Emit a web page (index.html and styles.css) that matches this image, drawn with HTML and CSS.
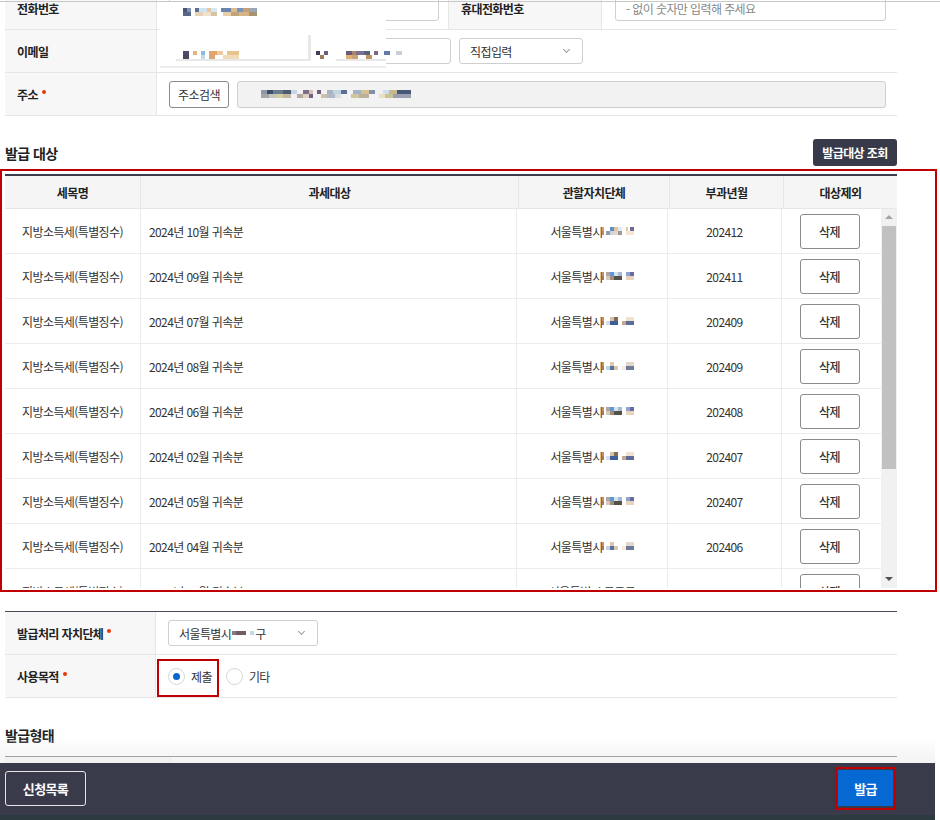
FILE: index.html
```html
<!DOCTYPE html>
<html lang="ko">
<head>
<meta charset="utf-8">
<title>발급</title>
<link rel="stylesheet" href="styles.css">
</head>
<body>
<div class="page">
  <div class="topline"></div>

  <div class="form top-form">
    <div class="row">
      <div class="th">전화번호</div>
      <div class="td td-phone"><div class="input w-phone"></div></div>
      <div class="th th-mid">휴대전화번호</div>
      <div class="td td-mobile"><div class="input w-mobile ph">- 없이 숫자만 입력해 주세요</div></div>
    </div>
    <div class="row">
      <div class="th">이메일</div>
      <div class="td email">
        <div class="input w-mail1"></div>
        <span class="at-slot"></span>
        <div class="input w-mail2"></div>
        <div class="select w-domain">직접입력<span class="chev"></span></div>
      </div>
    </div>
    <div class="row">
      <div class="th">주소<span class="req"></span></div>
      <div class="td addr">
        <button class="btn-line">주소검색</button>
        <div class="input input-gray w-addr"><span class="pix pix-addr"></span></div>
      </div>
    </div>
  </div>

  <div class="redact-top">
    <span class="pix pix-phone"></span>
    <div class="redact-mail">
      <div class="rbox rbox1"><span class="pix pix-mail1"></span></div>
      <div class="rbox rbox-at"><span class="pix pix-at"></span></div>
      <div class="rbox rbox2"><span class="pix pix-mail2"></span></div>
    </div>
  </div>

  <div class="sec-head">
    <h2>발급 대상</h2>
    <button class="btn-dark">발급대상 조회</button>
  </div>

  <div class="grid">
    <div class="ghead">
      <div>세목명</div>
      <div>과세대상</div>
      <div>관할자치단체</div>
      <div>부과년월</div>
      <div>대상제외</div>
    </div>
    <div class="gbody-wrap">
      <div class="gbody">
        <div class="grow"><div>지방소득세(특별징수)</div><div class="left">2024년 10월 귀속분</div><div>서울특별시 <span class="pix pix-gu"></span></div><div>202412</div><div class="act"><button class="btn-del">삭제</button></div></div>
        <div class="grow"><div>지방소득세(특별징수)</div><div class="left">2024년 09월 귀속분</div><div>서울특별시 <span class="pix pix-gu2"></span></div><div>202411</div><div class="act"><button class="btn-del">삭제</button></div></div>
        <div class="grow"><div>지방소득세(특별징수)</div><div class="left">2024년 07월 귀속분</div><div>서울특별시 <span class="pix pix-gu3"></span></div><div>202409</div><div class="act"><button class="btn-del">삭제</button></div></div>
        <div class="grow"><div>지방소득세(특별징수)</div><div class="left">2024년 08월 귀속분</div><div>서울특별시 <span class="pix pix-gu4"></span></div><div>202409</div><div class="act"><button class="btn-del">삭제</button></div></div>
        <div class="grow"><div>지방소득세(특별징수)</div><div class="left">2024년 06월 귀속분</div><div>서울특별시 <span class="pix pix-gu2"></span></div><div>202408</div><div class="act"><button class="btn-del">삭제</button></div></div>
        <div class="grow"><div>지방소득세(특별징수)</div><div class="left">2024년 02월 귀속분</div><div>서울특별시 <span class="pix pix-gu3"></span></div><div>202407</div><div class="act"><button class="btn-del">삭제</button></div></div>
        <div class="grow"><div>지방소득세(특별징수)</div><div class="left">2024년 05월 귀속분</div><div>서울특별시 <span class="pix pix-gu2"></span></div><div>202407</div><div class="act"><button class="btn-del">삭제</button></div></div>
        <div class="grow"><div>지방소득세(특별징수)</div><div class="left">2024년 04월 귀속분</div><div>서울특별시 <span class="pix pix-gu4"></span></div><div>202406</div><div class="act"><button class="btn-del">삭제</button></div></div>
        <div class="grow"><div>지방소득세(특별징수)</div><div class="left">2024년 03월 귀속분</div><div>서울특별시 구로구</div><div>202405</div><div class="act"><button class="btn-del">삭제</button></div></div>
      </div>
      <div class="scrollbar">
        <span class="sb-arrow sb-up"></span>
        <span class="sb-track"><span class="sb-thumb"></span></span>
        <span class="sb-arrow sb-down"></span>
      </div>
    </div>
  </div>

  <div class="form form2">
    <div class="row">
      <div class="th">발급처리 자치단체<span class="req"></span></div>
      <div class="td"><div class="select w-org">서울특별시<span class="pix pix-org"></span>구<span class="chev"></span></div></div>
    </div>
    <div class="row">
      <div class="th">사용목적<span class="req"></span></div>
      <div class="td radios">
        <label class="radio on"><span class="dot"></span>제출</label>
        <label class="radio"><span class="dot"></span>기타</label>
      </div>
    </div>
  </div>

  <h2 class="sec-title">발급형태</h2>
  <div class="form form3">
    <div class="row">
      <div class="th"></div>
      <div class="td"></div>
    </div>
  </div>

  <div class="footer">
    <button class="btn-outline">신청목록</button>
    <button class="btn-blue">발급</button>
  </div>

  <div class="mark mark-grid"></div>
  <div class="mark mark-radio"></div>
  <div class="mark mark-issue"></div>
</div>
</body>
</html>
```

FILE: styles.css
```css
html, body {
  margin: 0;
  padding: 0;
  overflow: hidden;
  background: #fff;
}
body {
  font-family: "Noto Sans CJK KR", "Noto Sans", sans-serif;
  font-size: 12px;
  color: #333;
  letter-spacing: -0.6px;
}
button {
  font-family: inherit;
  letter-spacing: inherit;
  cursor: pointer;
}
.page {
  position: relative;
  width: 940px;
  height: 820px;
  overflow: hidden;
}
.topline {
  position: absolute;
  left: 0;
  top: 1px;
  width: 940px;
  height: 1px;
  background: #c8c8c8;
  z-index: 2;
}

/* form tables */
.form {
  width: 892px;
  margin-left: 5px;
}
.top-form {
  margin-top: -13px;
}
.row {
  display: flex;
  height: 42px;
  border-bottom: 1px solid #e6e6e6;
}
.th {
  width: 139px;
  flex: none;
  display: flex;
  align-items: center;
  padding-left: 12px;
  background: #f7f7f7;
  border-right: 1px solid #e6e6e6;
  font-weight: 700;
  color: #222;
}
.td {
  flex: 1;
  display: flex;
  align-items: center;
  padding-left: 12px;
  gap: 8px;
}
.td-phone {
  flex: none;
  width: 279px;
}
.th-mid {
  width: 140px;
  border-left: 1px solid #e6e6e6;
}
.td-mobile { padding-left: 13px; }

.input, .select {
  box-sizing: border-box;
  height: 26px;
  border: 1px solid #cfcfcf;
  border-radius: 3px;
  background: #fff;
  display: flex;
  align-items: center;
  padding-left: 10px;
  color: #333;
}
.w-phone { width: 270px; }
.w-mobile { width: 271px; }
.ph { color: #888; }
.w-mail1 { width: 122px; }
.at-slot { width: 12px; margin-left: 2px; flex: none; }
.w-mail2 { width: 130px; }
.w-domain { width: 124px; position: relative; }
.addr { gap: 8px; }
.btn-line {
  box-sizing: border-box;
  width: 60px;
  height: 27px;
  border: 1px solid #8a8a8a;
  border-radius: 3px;
  background: #fff;
  font-size: 12px;
  color: #333;
  padding: 0;
}
.input-gray {
  background: #f2f2f2;
  height: 27px;
}
.w-addr { width: 649px; }

.chev {
  position: absolute;
  right: 13px;
  top: 8px;
  width: 4px;
  height: 4px;
  border-right: 1px solid #999;
  border-bottom: 1px solid #999;
  transform: rotate(45deg);
}
.req {
  display: inline-block;
  width: 4px;
  height: 4px;
  border-radius: 50%;
  background: #e8380d;
  margin-left: 4px;
  margin-top: -4px;
}

/* redaction patch over phone / email */
.redact-top {
  position: absolute;
  left: 160px;
  top: 2px;
  width: 226px;
  height: 64px;
  background: #fff;
  border-bottom: 2px solid #ececec;
  z-index: 1;
}
.pix-phone { display: block; margin: 4px 0 0 23px; }
.redact-mail {
  display: flex;
  margin-top: 16px;
  height: 26px;
}
.rbox {
  box-sizing: border-box;
  height: 26px;
  padding-top: 10px;
}
.rbox1 {
  width: 135px;
  margin-left: 16px;
  padding-left: 7px;
  border-bottom: 2px solid #e8e8e8;
  border-right: 3px solid #e8e8e8;
}
.rbox-at {
  width: 25px;
  padding-left: 5px;
}
.rbox2 {
  width: 50px;
  padding-left: 10px;
  border-bottom: 2px solid #e8e8e8;
}

/* pixelated redactions */
.pix {
  display: inline-block;
  height: 8px;
  flex: none;
}
.pix-phone {
  width: 74px;
  height: 8px;
  background:
    linear-gradient(90deg, #4a5675 0 4px, #8294b4 4px 8px, transparent 8px 12px, #5d6f92 12px 16px, #cfe3f1 16px 24px, #e7c79e 24px 28px, #d3e9f4 28px 34px, transparent 34px 38px, #6c84ad 38px 48px, #dcbc8f 48px 54px, #7a93bb 54px 60px, #c5a071 60px 66px, #9aa7b8 66px 74px) top/100% 4px no-repeat,
    linear-gradient(90deg, #5a6786 0 8px, transparent 8px 12px, #e6d3b8 12px 20px, #f0e2cd 20px 28px, #d9c2a0 28px 34px, transparent 34px 40px, #e9cfa7 40px 48px, #bfa47c 48px 56px, #d7b38a 56px 66px, #a7946f 66px 74px) bottom/100% 4px no-repeat;
}
.pix-mail1 {
  width: 56px;
  background:
    linear-gradient(90deg, #4f4a6b 0 6px, transparent 6px 10px, #e6b17d 10px 14px, transparent 14px 18px, #8fb8dd 18px 22px, transparent 22px 26px, #e3a56a 26px 34px, #efc9a0 34px 40px, transparent 40px 44px, #e7c48f 44px 50px) top/100% 4px no-repeat,
    linear-gradient(90deg, #4a4560 0 6px, transparent 6px 18px, #c7d8e6 18px 22px, transparent 22px 26px, #d8a677 26px 32px, transparent 32px 40px, #f0dbb8 40px 46px) bottom/100% 4px no-repeat;
}
.pix-at {
  width: 12px;
  background:
    linear-gradient(90deg, #443c55 0 4px, transparent 4px 8px, #6d5f7a 8px 12px) top/100% 4px no-repeat,
    linear-gradient(90deg, transparent 0 4px, #9b7a5e 4px 8px, transparent 8px 12px) bottom/100% 4px no-repeat;
}
.pix-mail2 {
  width: 56px;
  margin-top: -2px;
  background:
    linear-gradient(90deg, #6a5a7a 0 6px, #a8866a 6px 10px, #7d6f90 10px 18px, #54607e 18px 24px, transparent 24px 28px, #7a6a86 28px 32px, transparent 32px 38px, #5f7aa5 38px 44px, transparent 44px 50px, #c9ced8 50px 56px) top/100% 4px no-repeat,
    linear-gradient(90deg, #e0b071 0 6px, #c9a27a 6px 12px, transparent 12px 20px, #c09366 20px 26px, transparent 26px 56px) bottom/100% 4px no-repeat;
}
.pix-addr {
  width: 180px;
  margin-left: 13px;
  background:
    linear-gradient(90deg, #8e98a8 0 6px, #3c4d66 6px 12px, #6a7a8e 12px 22px, #4a5a70 22px 30px, #c6d6e0 30px 36px, transparent 36px 42px, #7c6e8a 42px 48px, #d2c4b2 48px 52px, transparent 52px 56px, #6e5d7a 56px 60px, transparent 60px 66px, #a9b3c0 66px 72px, #c2d4e2 72px 80px, #5c6e8e 80px 86px, transparent 86px 92px, #a2b2c4 92px 100px, #d6c094 100px 108px, #8090a6 108px 114px, transparent 114px 122px, #d2dcea 122px 128px, #c8b88e 128px 136px, #4a5878 136px 150px, transparent 150px 180px) top/100% 4px no-repeat,
    linear-gradient(90deg, #a6a6a6 0 8px, #c5c5b9 8px 16px, #d3cf9c 16px 22px, #c1b7a4 22px 30px, transparent 30px 36px, #b5a8a0 36px 42px, #e2d5c0 42px 48px, #7a5f8a 48px 52px, transparent 52px 60px, #c9c0a8 60px 66px, #b0b9c6 66px 74px, #d6dfe6 74px 80px, transparent 80px 90px, #cfc6a0 90px 98px, #b9b299 98px 108px, transparent 108px 118px, #e5e1c2 118px 124px, #c9c396 124px 132px, #9aa0b0 132px 150px, transparent 150px 180px) bottom/100% 4px no-repeat;
}
.pix-gu, .pix-gu2, .pix-gu3, .pix-gu4 {
  width: 32px;
  margin-left: -1px;
  vertical-align: -1px;
}
.pix-gu {
  background:
    linear-gradient(90deg, #d0a080 0 2px, transparent 2px 8px, #5a8fd0 8px 12px, #e7c49a 12px 16px, #e3eaf0 16px 20px, transparent 20px 24px, #e8c9a3 24px 26px, transparent 26px 28px, #6f6a95 28px 31px) top/100% 4px no-repeat,
    linear-gradient(90deg, #b38a6a 0 2px, transparent 2px 4px, #9a9a9a 4px 8px, #c7d6e6 8px 12px, #e9d6c2 12px 16px, #9b9b9b 16px 20px, transparent 20px 24px, #f5e6d6 24px 28px) bottom/100% 4px no-repeat;
}
.pix-gu2 {
  background:
    linear-gradient(90deg, #c09070 0 2px, transparent 2px 4px, #b2a4a0 4px 8px, #6096d6 8px 12px, #d3e5f0 12px 16px, #a9b9d0 16px 20px, transparent 20px 24px, #8ea4d0 24px 28px, #6a6aa4 28px 32px) top/100% 4px no-repeat,
    linear-gradient(90deg, #a47a5a 0 2px, transparent 2px 4px, #d4c9c0 4px 8px, #a08e78 8px 12px, #52524a 12px 20px, transparent 20px 24px, #e6d4bd 24px 28px) bottom/100% 4px no-repeat;
}
.pix-gu3 {
  background:
    linear-gradient(90deg, #c09070 0 2px, transparent 2px 8px, #d7c0a4 8px 12px, #7f6a54 12px 16px, transparent 16px 24px, #f0e2d0 24px 28px) top/100% 4px no-repeat,
    linear-gradient(90deg, #a47a5a 0 2px, transparent 2px 4px, #d8dde8 4px 8px, #3d5f9a 8px 16px, transparent 16px 20px, #c2a890 20px 24px, #5d6a9a 24px 28px) bottom/100% 4px no-repeat;
}
.pix-gu4 {
  background:
    linear-gradient(90deg, #c09070 0 2px, transparent 2px 8px, #dfc7aa 8px 12px, transparent 12px 24px, #e4d8cc 24px 28px) top/100% 4px no-repeat,
    linear-gradient(90deg, #a47a5a 0 2px, transparent 2px 4px, #c7d0dc 4px 8px, #4f73aa 8px 12px, #d8c6b2 12px 16px, transparent 16px 20px, #f4ece2 20px 24px, #6e7a98 24px 28px) bottom/100% 4px no-repeat;
}
.pix-org {
  width: 22px;
  margin: 0 1px;
  height: 4px;
  background: linear-gradient(90deg, #8a7a7e 0 4px, #6e5c62 4px 14px, transparent 14px 18px, #c4d8ea 18px 22px);
}

/* section headers */
.sec-head {
  width: 892px;
  margin: 23px 0 0 5px;
  display: flex;
  align-items: center;
  justify-content: space-between;
}
h2 {
  margin: 0;
  font-size: 14px;
  font-weight: 700;
  color: #222;
}
.btn-dark {
  height: 27px;
  width: 84px;
  border: 0;
  border-radius: 3px;
  background: #383a4a;
  color: #fff;
  font-size: 12px;
  font-weight: 700;
  padding: 0;
}

/* grid table */
.grid {
  width: 892px;
  margin: 8px 0 0 5px;
  border-top: 2px solid #3b3d4c;
}
.ghead {
  display: grid;
  grid-template-columns: 135px 378px 151px 114px 114px;
  height: 32px;
  background: #f5f5f5;
  border-bottom: 1px solid #e6e6e6;
}
.ghead > div {
  display: flex;
  align-items: center;
  justify-content: center;
  font-weight: 700;
  color: #222;
  border-left: 1px solid #e6e6e6;
}
.ghead > div:first-child { border-left: 0; }
.gbody-wrap {
  display: flex;
  height: 379px;
  overflow: hidden;
}
.gbody {
  width: 876px;
  flex: none;
}
.grow {
  display: grid;
  grid-template-columns: 135px 376px 151px 114px 100px;
  height: 44px;
  border-bottom: 1px solid #ececec;
}
.grow > div {
  display: flex;
  align-items: center;
  justify-content: center;
  border-left: 1px solid #ececec;
  color: #333;
  white-space: nowrap;
}
.grow > div:first-child { border-left: 0; }
.grow > div.left {
  justify-content: flex-start;
  padding-left: 8px;
}
.grow > div.act { padding-right: 4px; }
.btn-del {
  box-sizing: border-box;
  width: 60px;
  height: 35px;
  border: 1px solid #8a8a8a;
  border-radius: 3px;
  background: #fff;
  color: #333;
  font-size: 12px;
  font-weight: 500;
  padding: 0;
}
.scrollbar {
  width: 16px;
  flex: none;
  background: #f1f1f1;
  display: flex;
  flex-direction: column;
}
.sb-arrow {
  height: 17px;
  flex: none;
  position: relative;
}
.sb-arrow::after {
  content: "";
  position: absolute;
  left: 4px;
  width: 0;
  height: 0;
  border-left: 4px solid transparent;
  border-right: 4px solid transparent;
}
.sb-up::after { top: 6px; border-bottom: 4px solid #a3a3a3; }
.sb-down::after { top: 6px; border-top: 4px solid #505050; }
.sb-track {
  flex: 1;
  padding: 0 1px;
}
.sb-thumb {
  display: block;
  height: 243px;
  background: #c1c1c1;
}

/* second form */
.form2 {
  margin-top: 23px;
  border-top: 1px solid #4a4a55;
}
.form2 .th { width: 138px; }
.form2 .td { padding-left: 12px; }
.w-org {
  width: 150px;
  position: relative;
  padding-left: 10px;
}
.radios { gap: 0; padding-left: 11px; }
.radio {
  display: flex;
  align-items: center;
  color: #333;
  font-size: 12px;
  margin-right: 14px;
}
.radio .dot {
  box-sizing: border-box;
  width: 17px;
  height: 17px;
  border: 1px solid #d6d6d6;
  border-radius: 50%;
  margin-right: 6px;
  position: relative;
  background: #fff;
}
.radio.on .dot::after {
  content: "";
  position: absolute;
  left: 4px;
  top: 4px;
  width: 7px;
  height: 7px;
  border-radius: 50%;
  background: #0a64d2;
}
.sec-title {
  margin: 27px 0 0 5px;
  line-height: 20px;
}
.form3 {
  margin-top: 11px;
  border-top: 1px solid #4a4a55;
}
.form3 .th { width: 153px; }

/* footer */
.footer {
  position: absolute;
  left: 0;
  bottom: 0;
  width: 935px;
  height: 52px;
  background: #393b4a;
  border-bottom: 5px solid #2d3a3f;
  display: flex;
  justify-content: space-between;
  align-items: flex-start;
  z-index: 3;
}
.footer::before {
  content: "";
  position: absolute;
  left: 0;
  right: 0;
  top: -26px;
  height: 26px;
  background: linear-gradient(rgba(255,255,255,0), rgba(238,238,238,0.7));
}
.btn-outline {
  box-sizing: border-box;
  margin: 8px 0 0 5px;
  width: 81px;
  height: 35px;
  border: 1px solid #e6e6e6;
  border-radius: 3px;
  background: transparent;
  color: #fff;
  font-size: 13px;
  font-weight: 700;
  padding: 0;
}
.btn-blue {
  margin: 7px 42px 0 0;
  width: 55px;
  height: 36px;
  border: 0;
  background: #0668d2;
  color: #fff;
  font-size: 13px;
  font-weight: 700;
  padding: 0;
}

/* annotation boxes */
.mark {
  position: absolute;
  box-sizing: border-box;
  border: 2px solid #c00000;
  pointer-events: none;
  z-index: 4;
}
.mark-grid { left: 0; top: 169px; width: 937px; height: 423px; }
.mark-radio { left: 157px; top: 659px; width: 62px; height: 38px; }
.mark-issue { left: 835px; top: 767px; width: 61px; height: 43px; }
```
